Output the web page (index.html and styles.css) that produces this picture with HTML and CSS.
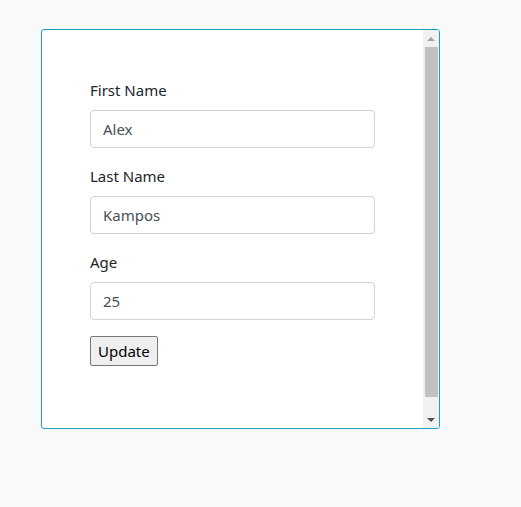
FILE: index.html
```html
<!DOCTYPE html>
<html lang="en">
<head>
<meta charset="utf-8">
<title>Edit person</title>
<link rel="stylesheet" href="styles.css">
</head>
<body>
<div class="card">
  <form class="content">
    <div class="form-group">
      <label class="label" for="first">First Name</label>
      <input class="form-control" id="first" type="text" value="Alex">
    </div>
    <div class="form-group">
      <label class="label" for="last">Last Name</label>
      <input class="form-control" id="last" type="text" value="Kampos">
    </div>
    <div class="form-group">
      <label class="label" for="age">Age</label>
      <input class="form-control" id="age" type="text" value="25">
    </div>
    <button class="btn" type="button">Update</button>
  </form>
  <div class="scrollbar" aria-hidden="true">
    <div class="sb-btn"><span class="arrow-up"></span></div>
    <div class="sb-track"><div class="sb-thumb"></div></div>
    <div class="sb-btn"><span class="arrow-down"></span></div>
  </div>
</div>
</body>
</html>
```
FILE: styles.css
```css
html, body {
  margin: 0;
  padding: 0;
}
body {
  background: #f8f9fa;
  font-family: "Noto Sans", "Open Sans", sans-serif;
  font-size: 15px;
  color: #212529;
  padding: 29px 0 0 41px;
  min-height: 507px;
  box-sizing: border-box;
}
.card {
  width: 399px;
  height: 400px;
  box-sizing: border-box;
  border: 1px solid #17a2b8;
  border-radius: 3px;
  background: #fff;
  display: flex;
  overflow: hidden;
}
.content {
  flex: 1;
  padding: 48px 48px 0 48px;
  margin: 0;
}
.form-group {
  margin-bottom: 16px;
}
.label {
  display: block;
  line-height: 24px;
  height: 24px;
  margin-bottom: 8px;
}
.form-control {
  display: block;
  width: 100%;
  height: 38px;
  box-sizing: border-box;
  padding: 6px 12px;
  font-family: inherit;
  font-size: 15px;
  color: #495057;
  background: #fff;
  border: 1px solid #ced4da;
  border-radius: 4px;
  outline: none;
}
.btn {
  display: block;
  height: 30px;
  box-sizing: border-box;
  padding: 0 7px;
  font-family: inherit;
  font-size: 15px;
  color: #000;
  background: #efefef;
  border: 1px solid #767676;
  border-radius: 2px;
}
.scrollbar {
  width: 16px;
  background: #f1f1f1;
  display: flex;
  flex-direction: column;
}
.sb-btn {
  height: 17px;
  display: flex;
  align-items: center;
  justify-content: center;
}
.sb-track {
  flex: 1;
  padding-bottom: 14px;
  display: flex;
}
.sb-thumb {
  flex: 1;
  margin: 0 1px 0 2px;
  background: #c1c1c1;
}
.arrow-up, .arrow-down {
  width: 0;
  height: 0;
  border-left: 4px solid transparent;
  border-right: 4px solid transparent;
}
.arrow-up {
  border-bottom: 4px solid #a3a3a3;
}
.arrow-down {
  border-top: 4px solid #505050;
}
```
